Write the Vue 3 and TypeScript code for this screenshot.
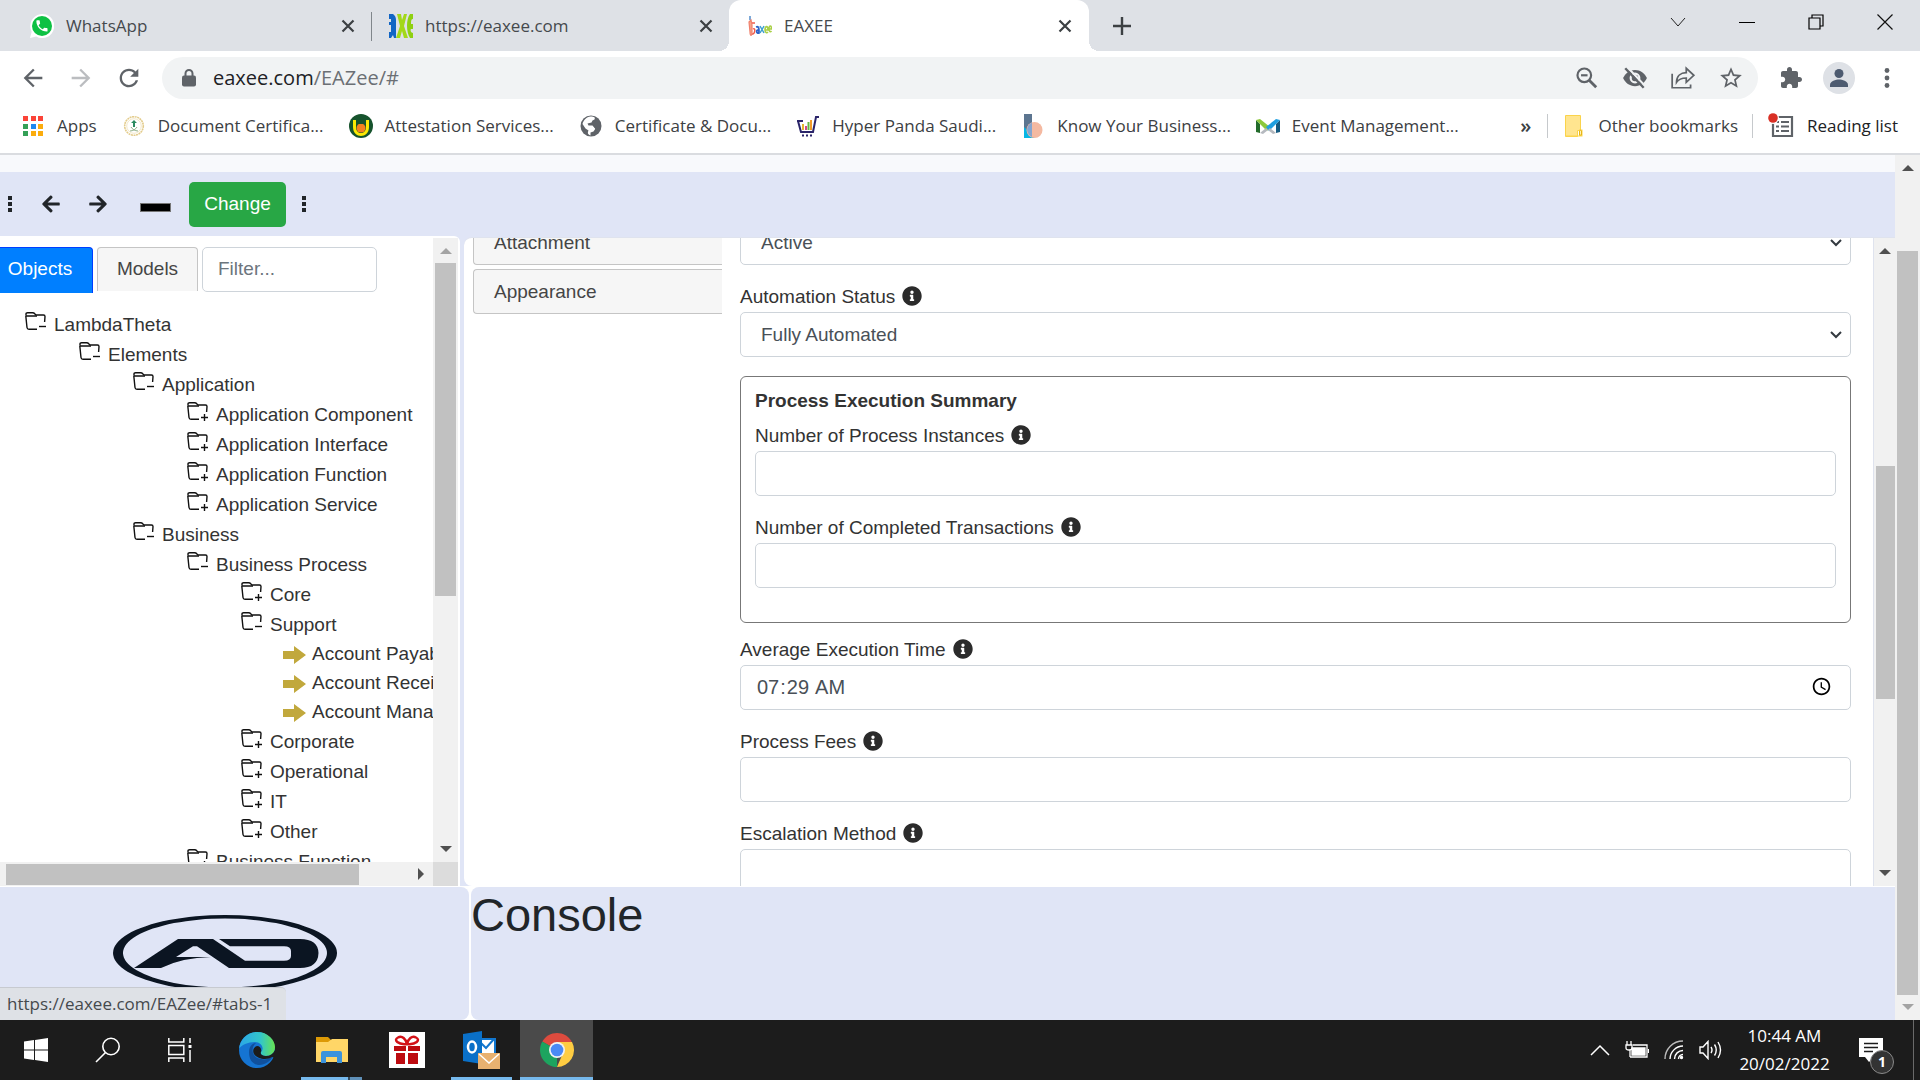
<script setup lang="ts">
import { ref } from 'vue'

interface TreeNode {
  label: string
  level: number
  kind: 'open' | 'closed' | 'leaf'
}

const tree: TreeNode[] = [
  { label: 'LambdaTheta', level: 0, kind: 'open' },
  { label: 'Elements', level: 1, kind: 'open' },
  { label: 'Application', level: 2, kind: 'open' },
  { label: 'Application Component', level: 3, kind: 'closed' },
  { label: 'Application Interface', level: 3, kind: 'closed' },
  { label: 'Application Function', level: 3, kind: 'closed' },
  { label: 'Application Service', level: 3, kind: 'closed' },
  { label: 'Business', level: 2, kind: 'open' },
  { label: 'Business Process', level: 3, kind: 'open' },
  { label: 'Core', level: 4, kind: 'closed' },
  { label: 'Support', level: 4, kind: 'open' },
  { label: 'Account Payable', level: 5, kind: 'leaf' },
  { label: 'Account Receivable', level: 5, kind: 'leaf' },
  { label: 'Account Management', level: 5, kind: 'leaf' },
  { label: 'Corporate', level: 4, kind: 'closed' },
  { label: 'Operational', level: 4, kind: 'closed' },
  { label: 'IT', level: 4, kind: 'closed' },
  { label: 'Other', level: 4, kind: 'closed' },
  { label: 'Business Function', level: 3, kind: 'closed' },
]

const infoPath =
  'M256 8C119.043 8 8 119.083 8 256c0 136.997 111.043 248 248 248s248-111.003 248-248C504 119.083 392.957 8 256 8zm0 110c23.196 0 42 18.804 42 42s-18.804 42-42 42-42-18.804-42-42 18.804-42 42-42zm56 254c0 6.627-5.373 12-12 12h-88c-6.627 0-12-5.373-12-12v-24c0-6.627 5.373-12 12-12h12v-64h-12c-6.627 0-12-5.373-12-12v-24c0-6.627 5.373-12 12-12h64c6.627 0 12 5.373 12 12v100h12c6.627 0 12 5.373 12 12v24z'
const arrowPath =
  'M257.5 445.1l-22.2 22.2c-9.4 9.4-24.6 9.4-33.9 0L7 273c-9.4-9.4-9.4-24.6 0-33.9L201.4 44.7c9.4-9.4 24.6-9.4 33.9 0l22.2 22.2c9.5 9.5 9.3 25-.4 34.3L136.6 216H424c13.3 0 24 10.7 24 24v32c0 13.3-10.7 24-24 24H136.6l120.5 114.8c9.8 9.3 10 24.8.4 34.3z'

const filter = ref('')
const status = ref('Active')
const automation = ref('Fully Automated')
const instances = ref('')
const transactions = ref('')
const time = ref('07:29')
const fees = ref('')
const escalation = ref('')
</script>

<template>
  <div class="desktop">
    <header class="chrome">
      <div class="tabstrip">
        <div class="tab tab-first">
          <svg class="fav" viewBox="0 0 24 24"><path d="M0 24l1.7-6.2A12 12 0 1 1 6.2 22.400z" fill="#fff" /><circle cx="12" cy="12" r="10" fill="#0dc143" /><path transform="translate(4.500 4.500) scale(.62)" fill="#fff" d="M6.620 10.790c1.440 2.830 3.760 5.140 6.590 6.590l2.200-2.200c.27-.27.67-.36 1.020-.24 1.120.37 2.330.57 3.570.57.550 0 1 .45 1 1V20c0 .55-.45 1-1 1-9.390 0-17-7.610-17-17 0-.55.45-1 1-1h3.500c.55 0 1 .45 1 1 0 1.250.2 2.450.57 3.570.11.350.03.740-.25 1.020l-2.200 2.200z" /></svg>
          <span class="tab-title">WhatsApp</span>
          <button class="plain" aria-label="Close tab"><svg width="14" height="14" viewBox="0 0 14 14"><path d="M1.500 1.500l11 11M12.500 1.500l-11 11" stroke="#3c4043" stroke-width="2.200" /></svg></button>
        </div>
        <div class="tab tab-second">
          <svg class="fav" viewBox="0 0 24 24"><path d="M0 0h4q3 2 3 6v18H5l-1-3-2 3H0v-6h2v-7H0V8h2V5H0z" fill="#1265c4" /><path d="M8 0h4l1 6 2-6h3l-3 12 4 12h-4l-2-7-2 7H7l4-12z" fill="#a3d818" /><path d="M24 0h-3c-4 5-4 18 0 24h3v-5c-2 0-3-3-2-4h2v-5h-2c0-3 0-5 2-5z" fill="#8fd012" /></svg>
          <span class="tab-title">https://eaxee.com</span>
          <button class="plain" aria-label="Close tab"><svg width="14" height="14" viewBox="0 0 14 14"><path d="M1.500 1.500l11 11M12.500 1.500l-11 11" stroke="#3c4043" stroke-width="2.200" /></svg></button>
        </div>
        <div class="tab tab-active">
          <svg class="fav" viewBox="0 0 24 24" fill="none"><path d="M2 2v4" stroke="#7da9d8" stroke-width="2" /><path d="M1 8l2-2 1 5v7c0 5-2 4-2 0z" fill="#f6a58c" stroke="#f0806c" stroke-width="1.200" /><path d="M4 9h3M4 20c3 1 4-7 1-5" stroke="#ef5b4c" stroke-width="1.500" /><path d="M8 13c3-1 3 1 3 6-3 1-3-4 0-3" stroke="#2b62c9" stroke-width="1.800" /><path d="M12 12l4 7M16 12l-4 7" stroke="#3e9fd0" stroke-width="1.500" /><path d="M17 16h3c0-5-3-4-3 0 0 3 2 3 3 2M21 15h2.500c0-4-2.500-4-2.500 0 0 3 1.500 3 2.500 2" stroke="#a8cf45" stroke-width="1.600" /></svg>
          <span class="tab-title">EAXEE</span>
          <button class="plain" aria-label="Close tab"><svg width="14" height="14" viewBox="0 0 14 14"><path d="M1.500 1.500l11 11M12.500 1.500l-11 11" stroke="#3c4043" stroke-width="2.200" /></svg></button>
        </div>
        <button class="plain new-tab" aria-label="New tab"><svg width="18" height="18" viewBox="0 0 18 18"><path d="M9 0v18M0 9h18" stroke="#3c4043" stroke-width="2.400" /></svg></button>
        <div class="window-controls">
          <button class="plain" aria-label="Tab search"><svg width="16" height="16" viewBox="0 0 16 16" fill="none" stroke="#222"><path d="M1 4l7 8 7-8" /></svg></button>
          <button class="plain" aria-label="Minimize"><svg width="16" height="16" viewBox="0 0 16 16"><path d="M0 8.500h16" stroke="#000" /></svg></button>
          <button class="plain" aria-label="Restore"><svg width="16" height="16" viewBox="0 0 16 16" fill="none" stroke="#000" stroke-width="1.200"><path d="M1 4h11v11H1zM4 4V1h11v11h-3" /></svg></button>
          <button class="plain" aria-label="Close"><svg width="16" height="16" viewBox="0 0 16 16" stroke="#111" stroke-width="1.200"><path d="M.5.5l15 15M15.500.5l-15 15" /></svg></button>
        </div>
      </div>

      <div class="navbar">
        <div class="nav-left">
          <button class="plain" aria-label="Back"><svg class="nav" viewBox="0 0 24 24" fill="#5f6368"><path d="M20 11H7.830l5.590-5.590L12 4l-8 8 8 8 1.410-1.410L7.830 13H20v-2z" /></svg></button>
          <button class="plain" aria-label="Forward"><svg class="nav" viewBox="0 0 24 24" fill="#bbbdc0"><path d="M4 13h12.170l-5.590 5.590L12 20l8-8-8-8-1.410 1.410L16.170 11H4z" /></svg></button>
          <button class="plain" aria-label="Reload"><svg class="nav" viewBox="0 0 24 24" fill="#5f6368"><path d="M17.650 6.350C16.200 4.900 14.210 4 12 4c-4.420 0-7.990 3.580-7.990 8s3.570 8 7.990 8c3.730 0 6.840-2.550 7.730-6h-2.080c-.82 2.330-3.040 4-5.650 4-3.310 0-6-2.690-6-6s2.690-6 6-6c1.660 0 3.140.69 4.220 1.780L13 11h7V4l-2.350 2.350z" /></svg></button>
        </div>
        <div class="omnibox">
          <svg width="14" height="18" viewBox="0 0 14 18"><path d="M3.500 7V4.500a3.500 3.500 0 0 1 7 0V7" fill="none" stroke="#5f6368" stroke-width="2" /><rect x="0" y="6.500" width="14" height="11" rx="2" fill="#5f6368" /></svg>
          <div class="url">eaxee.com<span>/EAZee/#</span></div>
          <div class="omni-icons">
            <svg class="omni" viewBox="0 0 24 24" fill="none" stroke="#5f6368" stroke-width="2"><circle cx="9.500" cy="9.500" r="6.300" /><path d="M14 14l6.500 6.500" stroke-width="2.600" /><path d="M6.500 9.500h6" /></svg>
            <svg class="omni" viewBox="0 0 24 24"><path d="M1 12C3 7.500 7 4.500 12 4.500S21 7.500 23 12c-2 4.500-6 7.500-11 7.500S3 16.500 1 12z" fill="#5f6368" /><circle cx="12" cy="12" r="4" fill="none" stroke="#f1f3f4" stroke-width="2" /><path d="M5 2l17 18" stroke="#f1f3f4" stroke-width="2" /><path d="M3 3l17 18" stroke="#5f6368" stroke-width="2.200" /></svg>
            <svg class="omni" viewBox="0 0 24 24" fill="none" stroke="#5f6368" stroke-width="1.600"><path d="M2 8v13h17v-3" /><path d="M6 16c0-6 4-9 9-9V3l7 6.500-7 6.500v-4c-4 0-7 1-9 4z" /></svg>
            <svg class="omni" viewBox="0 0 24 24" fill="#5f6368"><path d="M22 9.240l-7.190-.62L12 2 9.190 8.630 2 9.240l5.460 4.730L5.820 21 12 17.270 18.180 21l-1.630-7.030L22 9.240zM12 15.400l-3.760 2.270 1-4.280-3.320-2.880 4.380-.38L12 6.100l1.710 4.040 4.380.38-3.320 2.880 1 4.280L12 15.400z" /></svg>
          </div>
        </div>
        <div class="nav-right">
          <button class="plain" aria-label="Extensions"><svg width="28" height="24" viewBox="0 0 24 24" fill="#5f6368"><path d="M20.500 11H19V7c0-1.100-.9-2-2-2h-4V3.500C13 2.120 11.880 1 10.500 1S8 2.120 8 3.500V5H4c-1.100 0-1.990.9-1.990 2v3.800H3.500c1.490 0 2.700 1.210 2.700 2.700s-1.210 2.700-2.700 2.700H2V20c0 1.100.9 2 2 2h3.800v-1.500c0-1.490 1.210-2.700 2.700-2.700 1.490 0 2.700 1.210 2.700 2.700V22H17c1.100 0 2-.9 2-2v-4h1.500c1.380 0 2.500-1.120 2.500-2.500S21.880 11 20.500 11z" /></svg></button>
          <button class="plain" aria-label="Profile"><svg width="32" height="32" viewBox="0 0 32 32"><circle cx="16" cy="16" r="16" fill="#dee1e6" /><circle cx="16" cy="11.500" r="4.500" fill="#4d5b70" /><path d="M7 25v-2c0-4 6-5.500 9-5.500s9 1.500 9 5.500v2z" fill="#4d5b70" /></svg></button>
          <button class="plain" aria-label="Menu"><svg width="28" height="20" viewBox="0 0 28 20" fill="#5f6368"><circle cx="14" cy="2.500" r="2.400" /><circle cx="14" cy="10" r="2.400" /><circle cx="14" cy="17.500" r="2.400" /></svg></button>
        </div>
      </div>

      <nav class="bookmarks">
        <a href="#"><svg class="fav" viewBox="0 0 24 24"><g fill="#fb4438"><path d="M2 2h5v5H2zM10 2h5v5h-5zM17 2h5v5h-5z" /></g><path d="M2 10h5v5H2zM2 17h5v5H2z" fill="#34a057" /><path d="M10 10h5v5h-5z" fill="#1e88f0" /><path d="M17 10h5v5h-5zM10 17h5v5h-5zM17 17h5v5h-5z" fill="#fbac0d" /></svg>Apps</a>
        <a href="#"><svg class="fav" viewBox="0 0 24 24" fill="none"><circle cx="12" cy="12" r="9.300" stroke="#e3cc8c" stroke-width="1.600" stroke-dasharray="2 .6" /><circle cx="12" cy="12" r="7.300" stroke="#f3e8c9" /><path d="M12 6l3 3h-2v4h-2V9H9z" fill="#2b8a60" /><path d="M8 17c3 0 6-2 7-4M16 17c-3 0-6-2-7-4" stroke="#8fae86" /></svg>Document Certifica...</a>
        <a href="#"><svg class="fav" viewBox="0 0 24 24"><circle cx="12" cy="12" r="12" fill="#16532d" /><path d="M4 6h3v7c0 8 10 8 10 0V6h3v7c0 12-16 12-16 0z" fill="#fce903" /><circle cx="12" cy="14" r="4.500" fill="#f58220" /><path d="M9 7h6v3H9z" fill="#16532d" /></svg>Attestation Services...</a>
        <a href="#"><svg class="fav" viewBox="0 0 24 24" fill="#5f6368"><circle cx="12" cy="12" r="10.500" /><path d="M3.500 10c1-4 4-7 8-7.500 4 0 5 1 4 3l-2 1-1 2-4 1 1 2h4l3 3-2 3-3 1v3c-3-1-3-3-2-5l-3-2z" fill="#fff" /><path d="M13 10l4 2 4-2-1 4-3 2z" fill="#5f6368" /></svg>Certificate &amp; Docu...</a>
        <a href="#"><svg class="fav" viewBox="0 0 24 24" fill="none"><path d="M1 7h6M2 7l3 11h12L20 3h3" stroke="#2a2469" stroke-width="2" /><path d="M7 10v6" stroke="#e5b52f" stroke-width="2" /><path d="M10 12v4" stroke="#d2488a" stroke-width="2" /><path d="M12.500 8v8" stroke="#63b546" stroke-width="2" /><path d="M15 6v10" stroke="#f19b2c" stroke-width="2" /><path d="M6 21.500h2M10 21.500h2M14 21.500h2" stroke="#2a2469" stroke-width="2" /></svg>Hyper Panda Saudi...</a>
        <a href="#"><svg class="fav" viewBox="0 0 24 24"><path d="M3 0h8v16H3z" fill="#5c7590" /><path d="M3 13l11 11H3z" fill="#06b6e5" /><circle cx="13.500" cy="16" r="8" fill="#f4b9a1" /><path d="M11 8.500v14.500C5 20 4 12 11 8.500z" fill="#86a5cf" /></svg>Know Your Business...</a>
        <a href="#"><svg class="fav" viewBox="0 0 24 24"><path d="M0 6v12l4 1V10z" fill="#236b2b" /><path d="M0 6l4-1 10 8-3 4z" fill="#8cc83c" /><path d="M24 6v12l-4 1V10z" fill="#155a80" /><path d="M24 6l-4-1-10 8 3 4z" fill="#1f9fe0" /><path d="M4 19l6-5 2 2-5 4z" fill="#b5b9bf" /><path d="M20 19l-6-5-2 2 5 4z" fill="#b5b9bf" /></svg>Event Management...</a>
        <div class="bm-right">
          <button class="plain more" aria-label="More bookmarks">»</button>
          <span class="bar"></span>
          <a href="#"><svg class="fav" viewBox="0 0 24 24"><path d="M3.500 1.500h15v15h-3v6h-12z" fill="#ffe58f" stroke="#fad34b" /><path d="M17 15.500h3.500v7H4v-1h13z" fill="#fbd54d" /><path d="M17.500 21v-4c0-1 2-1 2 0v4z" fill="#fff3b8" stroke="#e7b618" /></svg>Other bookmarks</a>
          <span class="bar"></span>
          <a href="#" class="reading"><svg width="28" height="26" viewBox="0 0 28 26"><path d="M6 4h19v19H6z" fill="none" stroke="#5f6368" stroke-width="2.200" /><path d="M9 9h3M9 13.500h3M9 18h3M14 9h8M14 13.500h8M14 18h8" stroke="#5f6368" stroke-width="2" /><circle cx="6" cy="5" r="6" fill="#fff" /><circle cx="6" cy="5" r="4.800" fill="#d93025" /></svg>Reading list</a>
        </div>
      </nav>
    </header>

    <div class="viewport">
      <div class="page">
        <div class="page-top"></div>
        <div class="toolbar">
          <svg width="6" height="16" viewBox="0 0 6 16" fill="#212529"><path d="M1 0h4v4H1zM1 6h4v4H1zM1 12h4v4H1z" /></svg>
          <button class="plain tool-prev" aria-label="Undo"><svg width="18" height="20" viewBox="0 0 448 512" fill="#212529"><path :d="arrowPath" /></svg></button>
          <button class="plain tool-next" aria-label="Redo"><svg width="18" height="20" viewBox="0 0 448 512" fill="#212529"><path :d="arrowPath" transform="translate(448 0) scale(-1 1)" /></svg></button>
          <button class="swatch" aria-label="Colour"></button>
          <button class="change">Change</button>
          <svg width="6" height="16" viewBox="0 0 6 16" fill="#212529"><path d="M1 0h4v4H1zM1 6h4v4H1zM1 12h4v4H1z" /></svg>
        </div>

        <main class="work">
          <section class="explorer">
            <div class="explorer-body">
              <div class="explorer-content">
                <div class="explorer-tabs">
                  <button class="etab etab-on">Objects</button>
                  <button class="etab">Models</button>
                  <input v-model="filter" class="filter" type="text" placeholder="Filter..." aria-label="Filter" />
                </div>
                <ul class="tree">
                  <li
                    v-for="node in tree"
                    :key="node.label"
                    :class="node.kind"
                    :style="{ paddingLeft: (node.kind === 'leaf' ? 283 : 25 + node.level * 54) + 'px' }"
                  >
                    <svg v-if="node.kind === 'leaf'" width="24" height="18" viewBox="0 0 24 18"><path d="M0 5h11V0l12 9-12 9v-5H0z" fill="#c1a83c" /></svg>
                    <svg v-else width="22" height="20" viewBox="0 0 22 20" fill="none" stroke="#111" stroke-width="1.400">
                      <path d="M1 3.800V2Q1 .8 2.500.8H7.500Q9 .8 10 2L11 3H18.500Q20 3 20 4.500L19.600 10" />
                      <path d="M.8 4H12M.8 4L2 15.500Q2.200 17.300 4 17.300H12" />
                      <path v-if="node.kind === 'open'" d="M14 14.500h7" />
                      <path v-else d="M14 15.500h7M17.500 12v7" />
                    </svg>
                    <span>{{ node.label }}</span>
                  </li>
                </ul>
              </div>
              <div class="vscroll vs-left">
                <i class="up dim"></i>
                <div class="track"><div class="thumb thumb-tree"></div></div>
                <i class="down"></i>
              </div>
            </div>
            <div class="hscroll">
              <div class="htrack"><div class="hthumb"></div><i class="right"></i></div>
              <div class="corner"></div>
            </div>
          </section>

          <section class="details">
            <div class="details-view">
              <div class="details-content">
                <div class="side-tabs">
                  <button>Attachment</button>
                  <button>Appearance</button>
                </div>
                <form class="form" @submit.prevent>
                  <div class="select">
                    <select v-model="status" aria-label="Status"><option>Active</option></select>
                    <svg width="12" height="8" viewBox="0 0 12 8" fill="none" stroke="#343a40" stroke-width="2"><path d="M1 1l5 5 5-5" /></svg>
                  </div>
                  <label for="automation">Automation Status <svg viewBox="0 0 512 512"><path :d="infoPath" /></svg></label>
                  <div class="select">
                    <select id="automation" v-model="automation"><option>Fully Automated</option></select>
                    <svg width="12" height="8" viewBox="0 0 12 8" fill="none" stroke="#343a40" stroke-width="2"><path d="M1 1l5 5 5-5" /></svg>
                  </div>
                  <div class="summary">
                    <h2>Process Execution Summary</h2>
                    <label for="instances">Number of Process Instances <svg viewBox="0 0 512 512"><path :d="infoPath" /></svg></label>
                    <input id="instances" v-model="instances" type="text" />
                    <label for="transactions">Number of Completed Transactions <svg viewBox="0 0 512 512"><path :d="infoPath" /></svg></label>
                    <input id="transactions" v-model="transactions" type="text" />
                  </div>
                  <label for="time">Average Execution Time <svg viewBox="0 0 512 512"><path :d="infoPath" /></svg></label>
                  <input id="time" v-model="time" type="time" />
                  <label for="fees">Process Fees <svg viewBox="0 0 512 512"><path :d="infoPath" /></svg></label>
                  <input id="fees" v-model="fees" type="text" />
                  <label for="escalation">Escalation Method <svg viewBox="0 0 512 512"><path :d="infoPath" /></svg></label>
                  <input id="escalation" v-model="escalation" type="text" />
                </form>
              </div>
            </div>
            <div class="vscroll vs-form">
              <i class="up"></i>
              <div class="track"><div class="thumb thumb-form"></div></div>
              <i class="down"></i>
            </div>
          </section>
        </main>

        <footer class="bottom">
          <div class="brand">
            <svg width="224" height="78" viewBox="113 915 224 78" fill="#0b1522">
              <path fill-rule="evenodd" d="M225 915a112 38 0 1 0 .01 0zM225 918.500a102 34.500 0 1 1-.01 0z" />
              <path d="M134 968L178 939H213L245 960.700H284Q291 960.700 291 956V951Q291 946.300 284 946.300H230L219 939H300Q318 939 318.500 953Q318 968 300 968H229L197 946.300H193L176 957H211Q182 957.500 161 968z" />
            </svg>
            <div class="status">https://eaxee.com/EAZee/#tabs-1</div>
          </div>
          <div class="console"><h1>Console</h1></div>
        </footer>
      </div>
      <div class="vscroll vs-page">
        <i class="up"></i>
        <div class="track"><div class="thumb thumb-page"></div></div>
        <i class="down dim"></i>
      </div>
    </div>

    <footer class="taskbar">
      <div class="system">
        <button class="task" aria-label="Start"><svg width="24" height="24" viewBox="0 0 24 24" fill="#fff"><path d="M0 3.400L10 2v9.400H0zM11 1.900L24 0v11.400H11zM0 12.400h10V22L0 20.600zM11 12.400h13V24l-13-1.900z" /></svg></button>
        <button class="task" aria-label="Search"><svg width="26" height="26" viewBox="0 0 26 26" fill="none" stroke="#fff" stroke-width="1.600"><circle cx="16" cy="9.500" r="8.200" /><path d="M10.500 15.500L1 25" /></svg></button>
        <button class="task" aria-label="Task view"><svg width="24" height="24" viewBox="0 0 24 24" fill="none" stroke="#fff" stroke-width="1.500"><path d="M.8 0v4h15V0M.8 24v-4h15v4M.8 7.500h15v9H.8zM22 0v5M22 12v12" /><path d="M20.500 7h3v3h-3z" fill="#fff" stroke="none" /></svg></button>
      </div>
      <button class="task" aria-label="Edge"><svg width="36" height="36" viewBox="0 0 36 36"><defs><linearGradient id="eg" x1="0" x2="1"><stop offset="0" stop-color="#2ba6e8" /><stop offset=".6" stop-color="#33c6c9" /><stop offset="1" stop-color="#67e351" /></linearGradient></defs><circle cx="18" cy="18" r="18" fill="#1574d2" /><path d="M0 17C1 7 9 0 18 0c11 0 18 8 18 15 0 6-4 9-9 9-4 0-6-2-5-4 4-4 0-10-6-10C9 10 2 13 0 17z" fill="url(#eg)" /><path d="M10 20c0-6 4-9 7-9-6 5-4 15 5 16 4 1 8 0 12-3-5 11-24 14-24-4z" fill="#10509c" /><path d="M36 18v8l-3-1c-4 3-14 3-18-3-2-4 0-7 3-8 3 0 5 3 4 6-1 2 1 4 5 4s7-2 9-6z" fill="#1c1c1c" /></svg></button>
      <button class="task running grouped" aria-label="File Explorer"><svg width="32" height="28" viewBox="0 0 32 28"><path d="M0 1h12l3 3v6H0z" fill="#dd9a06" /><path d="M0 6h12l4-3h16v23H0z" fill="#ffd667" /><path d="M5 27V17q0-2 2-2h17q2 0 2 2v10h-5v-6H10v6z" fill="#3b93dc" /></svg></button>
      <button class="task" aria-label="Rewards"><svg width="36" height="36" viewBox="0 0 36 36"><path d="M0 0h36v36H0z" fill="#fff" /><g fill="#bd0b10"><path d="M5 14h12v5H5zM19 14h12v5H19zM7 21h9v11H7zM19 21h10v11H19z" /></g><path d="M18 12C9 13 4 8 9 5.500 13 3 17 7 18 12c1-5 5-9 9-6.500C32 8 27 13 18 12z" fill="none" stroke="#d31218" stroke-width="2.500" /></svg></button>
      <button class="task running" aria-label="Outlook"><svg width="38" height="38" viewBox="0 0 38 38"><path d="M17 8h15v16H17z" fill="#fff" stroke="#1277cf" stroke-width="2" /><path d="M18 12l5 5 8-9" fill="none" stroke="#1277cf" stroke-width="2" /><path d="M0 3l19-3v33L0 30z" fill="#0a70c8" /><ellipse cx="9" cy="16" rx="4" ry="5.500" fill="none" stroke="#fff" stroke-width="2.500" /><path d="M15 22h22v16H15z" fill="#e8b170" /><path d="M16 23l10 9 10-9" fill="none" stroke="#fff" stroke-width="1.500" /></svg></button>
      <button class="task running current" aria-label="Chrome"><svg width="34" height="34" viewBox="0 0 34 34"><path d="M17 17L2.300 8.500A17 17 0 0 1 31.700 8.500z" fill="#dd4b3e" /><path d="M17 17L2.300 8.500A17 17 0 0 0 17 34z" fill="#1da45f" /><path d="M17 9h15a17 17 0 0 1-15 25l6-14z" fill="#ffcd42" /><circle cx="17" cy="17" r="8" fill="#f2f2f2" /><circle cx="17" cy="17" r="6.300" fill="#4a8af4" /></svg></button>
      <div class="tray">
        <svg width="20" height="12" viewBox="0 0 20 12" fill="none" stroke="#fff" stroke-width="1.500"><path d="M1 11l9-9 9 9" /></svg>
        <svg width="24" height="18" viewBox="0 0 24 18" fill="none" stroke="#fff" stroke-width="1.300"><path d="M8 4h14v12H5M5 16V9M2 0v4M6 0v4M1 4h6v3q0 2-3 2T1 7z" /><path d="M7 7h13v7H7z" fill="#fff" /><path d="M23.500 8v4" /></svg>
        <svg width="20" height="20" viewBox="0 0 20 20" fill="none" stroke="#fff" stroke-width="1.400"><path d="M1 19C1 9 9 1 19 1" opacity=".7" /><path d="M6 19c0-7 6-13 13-13M10.500 19c0-5 4-8.500 8.500-8.500M14.500 19c0-2.500 2-4.500 4.500-4.500" /><circle cx="17.500" cy="17.500" r="1" fill="#fff" /></svg>
        <svg width="23" height="20" viewBox="0 0 23 20" fill="none" stroke="#fff" stroke-width="1.400"><path d="M1 7h3l5-5.500v17L4 13H1zM12 7q2 3 0 6M15.500 4.500q3.500 5.500 0 11M19 2q5 8 0 16" /></svg>
        <div class="clock"><span>10:44 AM</span><span>20/02/2022</span></div>
        <div class="notice">
          <svg width="24" height="24" viewBox="0 0 24 24"><path d="M0 0h24v19h-9l-5 5-4-5H0z" fill="#fff" /><path d="M5 5.500h14M5 9.500h14M5 13.500h9" stroke="#1c1c1c" stroke-width="1.400" /></svg>
          <b>1</b>
        </div>
        <span class="peek"></span>
      </div>
    </footer>
  </div>
</template>

<style>
body {
  margin: 0;
}
</style>

<style scoped>
* {
  box-sizing: border-box;
}
.desktop {
  height: 100vh;
  display: flex;
  flex-direction: column;
  overflow: hidden;
  font: 19px/30px 'Liberation Sans', Arial, sans-serif;
  color: #333;
}
button,
input,
select {
  font: inherit;
  color: inherit;
}
svg {
  flex: none;
  display: block;
}
.plain {
  border: 0;
  background: none;
  padding: 0;
}
a {
  color: inherit;
  text-decoration: none;
}

/* browser frame */
.chrome {
  flex: none;
  font-family: 'Open Sans', 'Noto Sans', sans-serif;
  background: #fff;
  border-bottom: 2px solid #dadce0;
}
.tabstrip {
  height: 51px;
  display: flex;
  background: #dee1e6;
}
.fav {
  width: 24px;
  height: 24px;
}
.tab {
  display: flex;
  align-items: center;
  gap: 12px;
  font-size: 17px;
  color: #45494d;
  position: relative;
}
.tab-title {
  flex: 1;
}
.tab-first {
  width: 372px;
  padding: 0 17px 0 30px;
}
.tab-first::after {
  content: '';
  position: absolute;
  right: 0;
  top: 12px;
  width: 1px;
  height: 29px;
  background: #80868b;
}
.tab-second {
  width: 357px;
  padding: 0 16px 0 17px;
}
.tab-active {
  width: 360px;
  padding: 0 17px 0 19px;
  background: #fff;
  border-radius: 12px 12px 0 0;
}
.tab-active::before,
.tab-active::after {
  content: '';
  position: absolute;
  bottom: 0;
  width: 10px;
  height: 10px;
}
.tab-active::before {
  left: -10px;
  background: radial-gradient(circle at 0 0, #dee1e6 10px, #fff 10px);
}
.tab-active::after {
  right: -10px;
  background: radial-gradient(circle at 100% 0, #dee1e6 10px, #fff 10px);
}
.new-tab {
  margin-left: 24px;
}
.window-controls {
  margin-left: auto;
  display: flex;
  gap: 53px;
  padding: 0 27px 8px 0;
}
.navbar {
  display: flex;
  align-items: center;
  height: 54px;
  padding: 0 19px;
}
.nav-left,
.nav-right,
.omni-icons {
  display: flex;
  align-items: center;
  gap: 20px;
}
.nav-right {
  gap: 18px;
}
.nav {
  width: 28px;
  height: 28px;
}
.omnibox {
  flex: 1;
  height: 42px;
  margin: 0 19px;
  padding: 0 14px 0 20px;
  border-radius: 21px;
  background: #f1f3f4;
  display: flex;
  align-items: center;
  gap: 17px;
}
.url {
  flex: 1;
  font-size: 20px;
  color: #202124;
}
.url span {
  color: #6b6f74;
}
.omni {
  width: 26px;
  height: 26px;
}
.omni-icons {
  gap: 22px;
}
.bookmarks {
  height: 48px;
  padding: 0 22px 6px 21px;
  display: flex;
  align-items: center;
  gap: 25px;
  font-size: 17px;
  color: #3c4043;
  white-space: nowrap;
}
.bookmarks a {
  display: flex;
  align-items: center;
  gap: 12px;
}
.bm-right {
  margin-left: auto;
  display: flex;
  align-items: center;
  gap: 14px;
}
.bar {
  width: 1px;
  height: 24px;
  background: #c6c9cc;
}
.more {
  font-size: 20px;
  font-weight: 600;
  margin-right: 2px;
}
.bookmarks .reading {
  color: #202124;
}

/* scrollbars */
.viewport {
  flex: 1;
  min-height: 0;
  display: flex;
}
.vscroll {
  flex: none;
  display: flex;
  flex-direction: column;
  align-items: center;
  background: #f1f1f1;
}
.track {
  flex: 1;
  width: 100%;
  padding: 0 2px;
  display: flex;
  flex-direction: column;
}
.thumb {
  background: #c1c1c1;
}
.up,
.down,
.right {
  width: 0;
  height: 0;
  border: 6px solid transparent;
}
.up {
  border-top: 0;
  border-bottom-color: #505050;
  margin: 10px 0 9px;
}
.down {
  border-bottom: 0;
  border-top-color: #505050;
  margin: 9px 0 10px;
}
.up.dim {
  border-bottom-color: #a3a3a3;
}
.down.dim {
  border-top-color: #a3a3a3;
}
.right {
  border-right: 0;
  border-left-color: #505050;
}
.vs-page {
  width: 25px;
}
.vs-left {
  width: 25px;
}
.vs-form {
  width: 22px;
  border-left: 1px solid #dfe3ee;
}
.vs-form .track {
  padding-right: 0;
}
.thumb-page {
  margin-top: 71px;
  flex: 1;
}
.thumb-tree {
  height: 58%;
}
.thumb-form {
  margin-top: 203px;
  height: 39%;
}

/* page */
.page {
  flex: 1;
  min-width: 0;
  display: flex;
  flex-direction: column;
  background: #e0e5f6;
}
.page-top {
  height: 17px;
  background: #f8f9fc;
}
.toolbar {
  height: 64px;
  display: flex;
  align-items: center;
  padding: 0 7px;
}
.tool-prev {
  margin-left: 29px;
}
.tool-next {
  margin-left: 29px;
}
.swatch {
  width: 31px;
  height: 9px;
  margin: 6px 18px 0 33px;
  padding: 0;
  background: #000;
  border: 1px solid #767676;
}
.change {
  height: 45px;
  width: 97px;
  margin-right: 15px;
  padding: 0;
  border: 0;
  border-radius: 5px;
  background: #28a745;
  color: #fff;
}
.work {
  flex: 1;
  min-height: 0;
  display: flex;
  gap: 4px;
}
.explorer {
  width: 460px;
  padding: 2px 2px 0 0;
  display: flex;
  flex-direction: column;
  background: #fff;
  border-radius: 0 6px 0 0;
}
.explorer-body {
  flex: 1;
  min-height: 0;
  display: flex;
}
.explorer-content {
  flex: 1;
  min-width: 0;
  overflow: hidden;
}
.explorer-tabs {
  display: flex;
  gap: 4px;
  margin-top: 9px;
  height: 46px;
  align-items: flex-start;
}
.etab {
  width: 101px;
  height: 44px;
  padding: 0 0 2px;
  border: 1px solid #c5c5c5;
  border-bottom: 0;
  border-radius: 4px 4px 0 0;
  background: #f6f6f6;
  color: #454545;
}
.etab-on {
  width: 93px;
  height: 46px;
  padding: 0 12px 4px 0;
  border: 1px solid #003eff;
  border-left: 0;
  border-bottom: 0;
  border-radius: 0 4px 0 0;
  background: #007fff;
  color: #fff;
}
.filter {
  width: 175px;
  height: 45px;
  padding: 0 15px 2px;
  border: 1px solid #ced4da;
  border-radius: 5px;
}
.filter::placeholder {
  color: #6c757d;
}
.tree {
  list-style: none;
  margin: 16px 0 0;
  padding: 0;
}
.tree li {
  height: 30px;
  display: flex;
  gap: 7px;
  white-space: nowrap;
}
.tree li svg {
  margin-top: 3px;
}
.tree li span {
  padding-top: 1px;
}
.tree .leaf {
  height: 29px;
  gap: 5px;
}
.tree .leaf svg {
  margin-top: 7px;
}
.tree .leaf span {
  padding-top: 0;
}
.hscroll {
  flex: none;
  height: 24px;
  display: flex;
  background: #f1f1f1;
}
.htrack {
  flex: 1;
  display: flex;
  align-items: center;
  justify-content: space-between;
  padding: 0 9px 0 6px;
}
.hthumb {
  width: 353px;
  height: 21px;
  background: #c1c1c1;
}
.corner {
  width: 25px;
  background: #dcdcdc;
}
.details {
  flex: 1;
  min-width: 0;
  display: flex;
  margin: 1px 0 0;
  background: #fff;
  border-radius: 8px 0 0 8px;
  border-top: 1px solid #dfe3ee;
  overflow: hidden;
}
.details-view {
  flex: 1;
  min-width: 0;
  overflow: hidden;
}
.details-content {
  display: flex;
  margin-top: -18px;
  padding: 0 22px 0 9px;
  gap: 18px;
}
.side-tabs {
  width: 249px;
  display: flex;
  flex-direction: column;
  gap: 4px;
}
.side-tabs button {
  height: 45px;
  padding: 0 20px;
  border: 1px solid #c5c5c5;
  border-right: 0;
  border-radius: 4px 0 0 4px;
  background: #f6f6f6;
  color: #454545;
  text-align: left;
}
.form {
  flex: 1;
  min-width: 0;
}
.form label {
  display: flex;
  align-items: center;
  gap: 7px;
  height: 30px;
}
.form label svg {
  width: 20px;
  height: 20px;
  margin-bottom: 2px;
  fill: #2b2b2b;
}
.form input,
.form select {
  display: block;
  width: 100%;
  height: 45px;
  margin-bottom: 17px;
  padding: 0 15px;
  border: 1px solid #ced4da;
  border-radius: 5px;
  background: #fff;
  color: #495057;
}
.form select {
  appearance: none;
  padding: 0 20px;
}
.form input[type='time'] {
  font-size: 20px;
  padding-bottom: 2px;
}
.select {
  position: relative;
}
.select svg {
  position: absolute;
  right: 9px;
  top: 19px;
}
.summary {
  margin: 19px 0 12px;
  padding: 9px 14px 17px;
  border: 1px solid #777;
  border-radius: 6px;
}
.summary h2 {
  margin: 0 0 5px;
  font-size: 19px;
  line-height: 30px;
}

/* bottom panels */
.bottom {
  flex: none;
  height: 134px;
  display: flex;
  gap: 2px;
  background: #fff;
  padding-top: 1px;
}
.brand {
  width: 469px;
  position: relative;
  overflow: hidden;
  background: #e0e5f6;
  border-radius: 0 8px 8px 0;
  padding: 28px 0 0 113px;
}
.status {
  position: absolute;
  left: 0;
  bottom: 0;
  height: 33px;
  padding: 0 14px 0 7px;
  border-top: 1px solid #c7cad0;
  border-radius: 0 5px 0 0;
  background: #dee1e6;
  color: #45494d;
  font: 17px/32px 'Open Sans', 'Noto Sans', sans-serif;
}
.console {
  flex: 1;
  background: #e0e5f6;
  border-radius: 8px 0 0 8px;
}
.console h1 {
  margin: 0;
  font-size: 47px;
  line-height: 56px;
  font-weight: 400;
  color: #212529;
}

/* taskbar */
.taskbar {
  flex: none;
  height: 60px;
  display: flex;
  gap: 2px;
  background: #1c1c1c;
  color: #fff;
  font-family: 'Open Sans', 'Noto Sans', sans-serif;
}
.task {
  width: 73px;
  padding: 0;
  border: 0;
  background: none;
  display: flex;
  align-items: center;
  justify-content: center;
  position: relative;
}
.system {
  display: flex;
  margin-right: 2px;
}
.system .task {
  width: 72px;
}
.running::after {
  content: '';
  position: absolute;
  left: 6px;
  right: 6px;
  bottom: 0;
  height: 3px;
  background: #76b9ed;
}
.grouped::after {
  background: linear-gradient(90deg, #76b9ed 47px, #33495c 47px, #33495c 49px, #5f90b8 49px);
}
.current {
  background: #4a4a4a;
}
.current::after {
  left: 0;
  right: 0;
}
.tray {
  margin-left: auto;
  display: flex;
  align-items: center;
  gap: 15px;
  padding-right: 6px;
}
.clock {
  width: 95px;
  display: flex;
  flex-direction: column;
  align-items: center;
  font-size: 17px;
  line-height: 28px;
}
.notice {
  position: relative;
  margin-left: 12px;
}
.notice b {
  position: absolute;
  left: 11px;
  top: 12px;
  width: 24px;
  height: 24px;
  border: 1px solid #8a8a8a;
  border-radius: 12px;
  background: #333;
  font-size: 14px;
  line-height: 22px;
  text-align: center;
}
.peek {
  width: 1px;
  height: 60px;
  margin-left: 15px;
  background: #6a6a6a;
}
</style>
